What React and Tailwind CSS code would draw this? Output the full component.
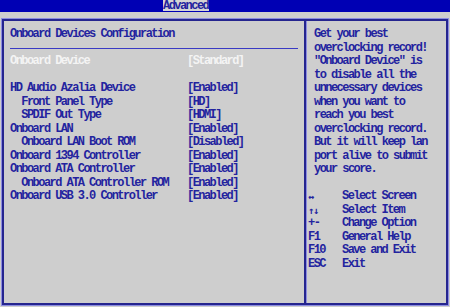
import React from "react";

const rows = [
  { label: "HD Audio Azalia Device", value: "[Enabled]", indent: false },
  { label: "Front Panel Type", value: "[HD]", indent: true },
  { label: "SPDIF Out Type", value: "[HDMI]", indent: true },
  { label: "Onboard LAN", value: "[Enabled]", indent: false },
  { label: "Onboard LAN Boot ROM", value: "[Disabled]", indent: true },
  { label: "Onboard 1394 Controller", value: "[Enabled]", indent: false },
  { label: "Onboard ATA Controller", value: "[Enabled]", indent: false },
  { label: "Onboard ATA Controller ROM", value: "[Enabled]", indent: true },
  { label: "Onboard USB 3.0 Controller", value: "[Enabled]", indent: false },
];

const help = [
  "Get your best",
  "overclocking record!",
  "\"Onboard Device\" is",
  "to disable all the",
  "unnecessary devices",
  "when you want to",
  "reach you best",
  "overclocking record.",
  "But it will keep lan",
  "port alive to submit",
  "your score.",
];

const keys = [
  ["↔", "Select Screen", true],
  ["↑↓", "Select Item", true],
  ["+-", "Change Option", false],
  ["F1", "General Help", false],
  ["F10", "Save and Exit", false],
  ["ESC", "Exit", false],
];

export default function App() {
  return (
    <div
      className="w-[450px] h-[307px] bg-[#cecece] text-[#23239f] font-bold text-[12px] leading-[13.5px] tracking-[-1.55px] overflow-hidden"
      style={{ fontFamily: "'Liberation Mono', 'DejaVu Sans Mono', monospace" }}
    >
      <div className="h-[12px] bg-[#0000b4] flex">
        <div className="ml-[163px] w-[46px] h-[11px] bg-[#d4d4d4] leading-[12px] whitespace-nowrap">
          Advanced
        </div>
      </div>
      <div className="mt-[7px] ml-[2px] w-[446px] h-[286px] border-2 border-[#25258f] shadow-[0_0_0_1px_#8c8ce0] flex">
        <div className="w-[302px] pl-[6px] pt-[7px] border-r-2 border-[#25258f]">
          <div className="whitespace-nowrap">Onboard Devices Configuration</div>
          <div className="h-[13.5px] flex items-center pr-[4px]">
            <div className="w-[288px] h-px bg-[#3a3ac4]" />
          </div>
          <div className="flex text-[#f4f4f4] whitespace-nowrap">
            <div className="w-[177px]">Onboard Device</div>
            <div>[Standard]</div>
          </div>
          <div className="h-[13.5px]" />
          {rows.map((r) => (
            <div key={r.label} className="flex whitespace-nowrap">
              <div className={r.indent ? "w-[177px] pl-[11.3px]" : "w-[177px]"}>{r.label}</div>
              <div>{r.value}</div>
            </div>
          ))}
        </div>
        <div className="flex-1 pl-[1px] pt-[7px] border-l border-[#8c8ce0]">
          <div className="pl-[6px]">
            {help.map((h) => (
              <div key={h} className="whitespace-nowrap">{h}</div>
            ))}
          </div>
          <div className="h-[13.5px]" />
          {keys.map(([k, d, arrow]) => (
            <div key={k} className="flex whitespace-nowrap">
              <div
                className={arrow ? "w-[34px] text-[10px] tracking-[-1px]" : "w-[34px]"}
                style={arrow ? { fontFamily: "'DejaVu Sans Mono', monospace" } : undefined}
              >
                {k}
              </div>
              <div>{d}</div>
            </div>
          ))}
        </div>
      </div>
    </div>
  );
}
